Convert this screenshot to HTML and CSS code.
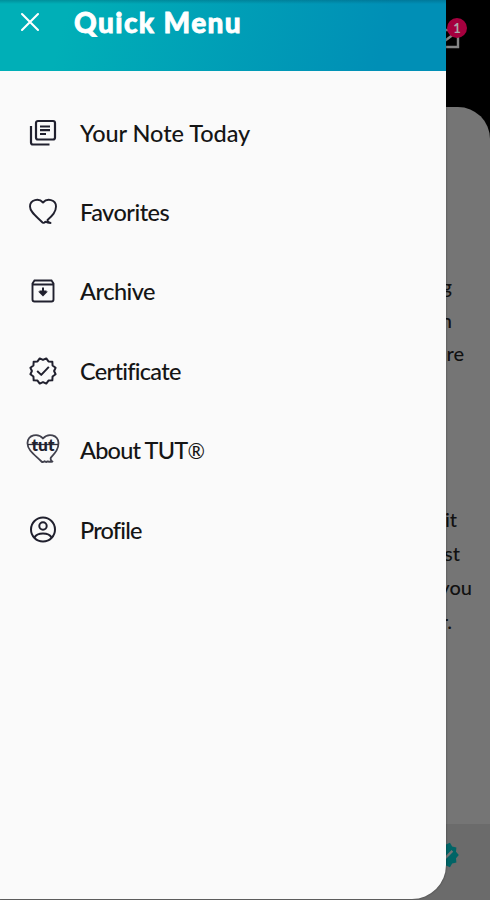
FILE: index.html
```html
<!DOCTYPE html>
<html lang="en">

<head>
    <meta charset="UTF-8">
    <meta name="viewport" content="width=device-width, initial-scale=1.0">
    <title>Quick Menu</title>
    <link rel="stylesheet" href="styles.css">
</head>

<body>

    <!-- Page behind the menu -->
    <div class="page">
        <div class="topbar">
            <div class="inbox">
                <svg width="28" height="28" viewBox="0 0 28 28" fill="none" stroke="#858585" stroke-width="2.4">
                    <path d="M2 5h24v17H2zM2 6l12 9 12-9"/>
                </svg>
                <span class="badge">1</span>
            </div>
        </div>
        <main class="note">
            <div class="paragraph">
                <p class="end-short">g</p>
                <p class="end-short">n</p>
                <p class="end-re">re</p>
            </div>
            <div class="paragraph lower">
                <p class="end-it">it</p>
                <p class="end-st">st</p>
                <p class="end-you">you</p>
                <p class="end-short">r.</p>
            </div>
        </main>
        <div class="bottombar">
            <svg width="28" height="28" viewBox="0 0 24 24">
                <path fill="#006466" d="M23 12l-2.44-2.79.34-3.69-3.61-.82-1.89-3.2L12 2.96 8.6 1.5 6.71 4.69 3.1 5.5l.34 3.7L1 12l2.44 2.79-.34 3.7 3.61.82L8.6 22.5l3.4-1.47 3.4 1.46 1.89-3.19 3.61-.82-.34-3.69z"/>
                <path fill="none" stroke="#747474" stroke-width="2" d="M7 12l3.500 3.500L17.500 8.500"/>
            </svg>
        </div>
    </div>

    <!-- Side menu -->
    <div class="drawer">
        <div class="drawer-header">
            <svg class="close" width="20" height="20" viewBox="0 0 20 20" fill="none" stroke="#fff" stroke-width="2.1" stroke-linecap="round">
                <path d="M2 2l16 16M18 2L2 18"/>
            </svg>
            <h1>Quick Menu</h1>
        </div>
        <nav>
            <a href="#" class="today">
                <svg width="28" height="28" viewBox="0 0 28 28" fill="none" stroke="#20202e" stroke-width="2.2">
                    <rect x="7" y="2" width="19" height="18.500" rx="2"/>
                    <path d="M2 7v16.500q0 2 2 2h16.500M11 7.500h10M11 11.200h10M11 15h6"/>
                </svg>
                <span>Your Note Today</span>
            </a>
            <a href="#" class="favorites">
                <svg width="28" height="28" viewBox="0 0 28 28" fill="none" stroke="#20202e" stroke-width="1.900" stroke-linejoin="round" stroke-linecap="round">
                    <path d="M14 4.500C10 0 1 1.300 1 8.500c0 5.500 6 9.500 12.500 16q1.500 1 3-.8 2 1.300 5 1.300-3-1-3-3C23.500 17.500 27 14 27 8.500 27 1.300 18 0 14 4.500z"/>
                </svg>
                <span>Favorites</span>
            </a>
            <a href="#" class="archive">
                <svg width="28" height="28" viewBox="0 0 28 28" fill="none" stroke="#20202e" stroke-width="1.900">
                    <path d="M3.500 6.500l2-3h17l2 3v16q0 2-2 2h-17q-2 0-2-2zM3.500 7.500h21"/>
                    <path d="M14 10.500v8M10.500 14.500h7M11.500 15.500l2.500 2.500 2.500-2.500z" stroke-width="2"/>
                </svg>
                <span>Archive</span>
            </a>
            <a href="#" class="certificate">
                <svg width="28" height="28" viewBox="0 0 24 24" fill="none" stroke="#20202e" stroke-width="1.700" stroke-linejoin="round">
                    <path d="M12 2.500l2.800-1.300 1.900 2.600 3.300.2.200 3.300 2.600 1.900L21.500 12l1.300 2.800-2.600 1.900-.2 3.300-3.300.2-1.900 2.600L12 21.500l-2.800 1.300-1.900-2.600-3.300-.2-.2-3.300-2.600-1.900L2.500 12 1.200 9.200l2.600-1.900L4 4l3.300-.2 1.900-2.600z"/>
                    <path d="M7 12l3.500 3.300 6.500-6.800"/>
                </svg>
                <span>Certificate</span>
            </a>
            <a href="#" class="about">
                <svg class="tut" width="34" height="32" viewBox="0 0 34 32">
                    <path fill="none" stroke="#41414d" stroke-width="1.800" stroke-linejoin="round" d="M17 4.500C12-1.300 2 .5 1.500 9 1.200 16 9 21 15.500 27.500q1.200 1.200 3-.3 1.500 1.500 3.200.1 2 .8 4.800.2-2.400-1-1.700-3.800C29 19 32.500 15.500 32.500 9 32 .5 22-1.300 17 4.500z"/>
                    <path stroke="#30303c" stroke-width="1.300" d="M2 10.500h30"/>
                    <text x="17" y="17" text-anchor="middle" textLength="23" lengthAdjust="spacingAndGlyphs">tut</text>
                </svg>
                <span>About TUT<span class="reg">®</span></span>
            </a>
            <a href="#" class="profile">
                <svg width="28" height="28" viewBox="0 0 28 28" fill="none" stroke="#20202e" stroke-width="2">
                    <circle cx="14" cy="13.500" r="12"/>
                    <circle cx="14" cy="10" r="3.700"/>
                    <path d="M5.500 21.500q2-4 8.500-4t8.500 4"/>
                </svg>
                <span>Profile</span>
            </a>
        </nav>
    </div>

</body>

</html>
```

FILE: styles.css
```css
* {
    margin: 0;
    padding: 0;
    box-sizing: border-box;
}

body {
    font-family: Lato, "Liberation Sans", sans-serif;
    background-color: #000;
    height: 900px;
    overflow: hidden;
    position: relative;
}

/* Page behind the menu */
.page {
    height: 900px;
    display: flex;
    flex-direction: column;
}

.topbar {
    height: 107px;
    display: flex;
    justify-content: flex-end;
    padding: 25px 30px 0 0;
}

.inbox {
    position: relative;
    width: 28px;
    height: 28px;
}

.badge {
    position: absolute;
    top: -7px;
    right: -7px;
    width: 20px;
    height: 20px;
    border-radius: 50%;
    background-color: #a5003e;
    color: #aaa;
    font-size: 13px;
    font-weight: bold;
    line-height: 20px;
    text-align: center;
}

.note {
    flex-grow: 1;
    background-color: #757575;
    border-radius: 0 32px 0 0;
    padding-top: 163px;
    text-align: right;
    font-size: 20px;
    color: #111;
}

.paragraph {
    font-weight: 500;
    line-height: 33.5px;
}

.lower {
    padding-top: 131px;
    line-height: 34px;
}

.end-short {
    padding-right: 38px;
}

.end-re {
    padding-right: 26px;
}

.end-it {
    padding-right: 33px;
}

.end-st {
    padding-right: 30px;
}

.end-you {
    padding-right: 18px;
}

.bottombar {
    height: 76px;
    background-color: #6b6b6b;
    display: flex;
    justify-content: flex-end;
    padding: 17px 30px 0 0;
}

/* Side menu */
.drawer {
    position: absolute;
    top: 0;
    left: 0;
    width: 446px;
    height: 899px;
    background-color: #fafafa;
    border-radius: 0 0 34px 0;
    box-shadow: 0 0 2px rgba(0, 0, 0, 0.5);
    overflow: hidden;
}

.drawer-header {
    height: 71px;
    display: flex;
    align-items: flex-start;
    gap: 34px;
    padding: 5px 20px;
    color: #fff;
    background: linear-gradient(to bottom, rgba(0, 70, 90, 0.3), transparent 4px), linear-gradient(105deg, #00afb7 15%, #008fb6 85%);
}

.close {
    margin-top: 7px;
}

.drawer-header h1 {
    font-size: 28px;
    line-height: 34px;
    font-weight: 900;
    letter-spacing: 1.4px;
    -webkit-text-stroke: 0.8px #fff;
}

nav {
    padding-top: 22px;
}

nav a {
    height: 79.4px;
    display: flex;
    align-items: center;
    gap: 23px;
    padding-left: 29px;
    color: #151515;
    text-decoration: none;
    font-size: 23.5px;
    font-weight: 500;
    letter-spacing: -0.5px;
    white-space: nowrap;
}

nav a.today {
    letter-spacing: -0.05px;
}

nav a.certificate {
    letter-spacing: -0.7px;
}

nav a.about,
nav a.profile {
    letter-spacing: -0.8px;
}

nav svg {
    flex-shrink: 0;
}

nav .tut {
    margin: 0 -3px;
}

.tut text {
    font-size: 16px;
    font-weight: 900;
    letter-spacing: 0;
    fill: #20202e;
}

.reg {
    font-size: 21px;
    font-weight: 400;
}
```
